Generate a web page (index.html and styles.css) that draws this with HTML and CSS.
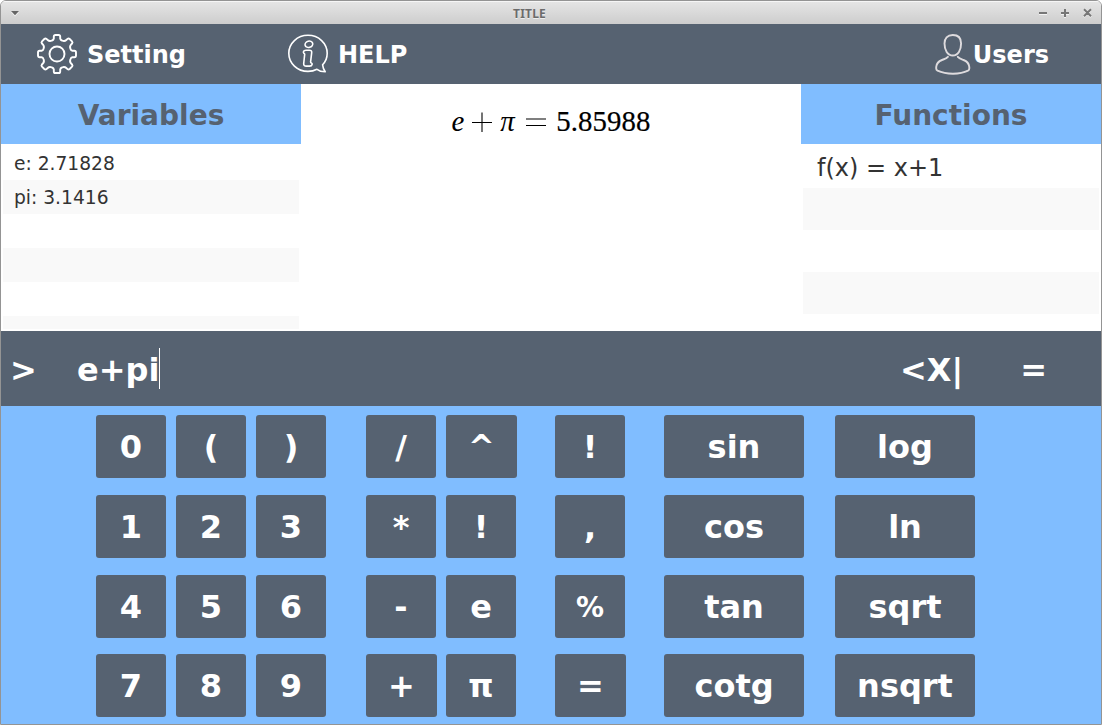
FILE: index.html
```html
<!DOCTYPE html>
<html lang="en">
<head>
<meta charset="utf-8">
<title>TITLE</title>
<link rel="stylesheet" href="styles.css">
</head>
<body>
<div class="window">
  <header class="titlebar">
    <svg class="menu-arrow" width="10" height="7" viewBox="0 0 10 7"><path d="M0.500 1.500h9L5 6.500z" fill="#fff" opacity=".7"/><path d="M1 1h8L5 5.200z" fill="#666"/></svg>
    <span class="title">TITLE</span>
    <svg class="controls" width="56" height="12" viewBox="0 0 56 12">
      <g fill="none" stroke="#fff" stroke-width="2" opacity=".7"><path d="M1 7h8M23 7h8M27 3v8M46 3l7 7M53 3l-7 7"/></g>
      <g fill="none" stroke="#777" stroke-width="2"><path d="M1 6h8M23 6h8M27 2v8M46 2.300l7 7M53 2.300l-7 7"/></g>
    </svg>
  </header>

  <nav class="toolbar">
    <div class="tool setting">
      <svg width="40" height="40" viewBox="0 0 40 40" fill="none" stroke="#fff" stroke-width="1.900" stroke-linejoin="round">
        <path d="M16.800 4.500V2.600Q16.800 1 18.400 1h3.200Q23.200 1 23.200 2.600V4.500Q23.400 6 25 6.500Q27.600 7.600 29.300 6L30.500 4.900Q31.600 4 32.700 5L35 7.300Q36 8.400 35.100 9.500L34 10.700Q32.400 12.400 33.500 15Q34 16.600 35.500 16.800H37.400Q39 16.800 39 18.400V21.600Q39 23.200 37.400 23.200H35.500Q34 23.400 33.500 25Q32.400 27.600 34 29.300L35.100 30.500Q36 31.600 35 32.700L32.700 35Q31.600 36 30.500 35.100L29.300 34Q27.600 32.400 25 33.500Q23.400 34 23.200 35.500V37.400Q23.200 39 21.600 39H18.400Q16.800 39 16.800 37.400V35.500Q16.600 34 15 33.500Q12.400 32.400 10.700 34L9.500 35.100Q8.400 36 7.300 35L5 32.700Q4 31.600 4.900 30.500L6 29.300Q7.600 27.600 6.500 25Q6 23.400 4.500 23.200H2.600Q1 23.200 1 21.600V18.400Q1 16.800 2.600 16.800H4.500Q6 16.600 6.500 15Q7.600 12.400 6 10.700L4.900 9.500Q4 8.400 5 7.300L7.300 5Q8.400 4 9.500 4.900L10.700 6Q12.400 7.600 15 6.500Q16.600 6 16.800 4.500Z"/>
        <circle cx="20" cy="20" r="7.500"/>
      </svg>
      <span>Setting</span>
    </div>
    <div class="tool help">
      <svg width="40" height="40" viewBox="0 0 40 40" fill="none" stroke="#fff" stroke-width="1.600" stroke-linejoin="round">
        <path d="M34.600 30.800Q35 34.500 37.200 37.800Q32 37.600 29 35.300Q25 37.400 20 37.400C9.300 37.400 .8 29.300 .8 19.300S9.300 1.300 20 1.300S39.200 9.300 39.200 19.300Q39.200 26 34.600 30.800Z"/>
        <ellipse cx="20.900" cy="10.300" rx="3.900" ry="3.100" transform="rotate(-15 20.900 10.300)"/>
        <path d="M15.400 18.200Q15.500 16.300 18.200 16.200H21.400Q23.900 16.200 23.700 18.600L22.600 27.800Q22.600 28.900 23.400 28.900Q24.400 29.200 24.100 30.500Q23.700 32.100 21.500 32.100H18.300Q15.500 32.100 15.700 29.500L16.700 20.200Q16.700 19.500 15.800 19.200Z"/>
      </svg>
      <span>HELP</span>
    </div>
    <div class="tool users">
      <svg width="36" height="41" viewBox="0 0 36 41" fill="none" stroke="#dedbde" stroke-width="1.900" stroke-linecap="round" stroke-linejoin="round">
        <path d="M17.800 1C12.300 1 9.500 4.500 9.500 9.500C9.500 16 12.500 21.500 17.800 21.500S26.100 16 26.100 9.500C26.100 4.500 23.300 1 17.800 1Z"/>
        <path d="M12.900 22.800C11.500 24.500 9.500 25 7 26C3 27.500 1.500 29.500 1.200 33V34.500Q1.200 36 2.500 36.700Q9 39.700 18 39.700T33 36.700Q34.300 36 34.300 34.500V33C34 29.500 32.500 27.500 28.500 26C26 25 24.200 24.500 22.800 22.800"/>
      </svg>
      <span>Users</span>
    </div>
  </nav>

  <main class="panels">
    <section class="side variables">
      <h2>Variables</h2>
      <ul><li>e: 2.71828</li><li>pi: 3.1416</li><li></li><li></li><li></li><li></li></ul>
    </section>
    <section class="result">
      <span class="formula"><i class="var">e</i><svg class="op" width="20" height="20" viewBox="0 0 20 20"><path d="M0 10.500h20M10 .5v19.500" stroke="#000" stroke-width="1.100"/></svg><i class="pi">π</i><svg class="eq" width="20" height="20" viewBox="0 0 20 20"><path d="M0 7h20M0 13.500h20" stroke="#000" stroke-width="1.200"/></svg><span class="number">5.85988</span></span>
    </section>
    <section class="side functions">
      <h2>Functions</h2>
      <ul><li>f(x) = x+1</li><li></li><li></li><li></li><li></li></ul>
    </section>
  </main>

  <div class="entry">
    <span class="prompt">&gt;</span>
    <span class="expression">e+pi</span><span class="caret"></span>
    <span class="erase">&lt;X|</span>
    <span class="submit">=</span>
  </div>

  <div class="keypad">
    <button>0</button><button>(</button><button>)</button><button>/</button><button class="plus1">^</button><button>!</button><button class="wide">sin</button><button class="wide">log</button>
    <button>1</button><button>2</button><button>3</button><button>*</button><button>!</button><button>,</button><button class="wide">cos</button><button class="wide">ln</button>
    <button>4</button><button>5</button><button>6</button><button>-</button><button>e</button><button class="percent">%</button><button class="wide">tan</button><button class="wide">sqrt</button>
    <button>7</button><button>8</button><button>9</button><button class="plus1">+</button><button>π</button><button class="plus1">=</button><button class="wide">cotg</button><button class="wide">nsqrt</button>
  </div>
</div>
</body>
</html>
```
FILE: styles.css
```css
* { box-sizing: border-box; }

body {
  margin: 0;
  background: #fff;
  font-family: "DejaVu Sans", sans-serif;
}

.window {
  width: 1102px;
  height: 725px;
  border: 1px solid #949494;
  border-radius: 6px 6px 0 0;
  overflow: hidden;
  display: flex;
  flex-direction: column;
}

.titlebar {
  height: 23px;
  flex: none;
  display: grid;
  grid-template-columns: 56px 1fr 100px;
  align-items: center;
  background: linear-gradient(#e6e6e6, #cdcdcd);
  box-shadow: inset 0 1px #f6f6f6;
}

.menu-arrow { margin: 2px 0 0 9px; }

.title {
  text-align: center;
  padding: 2px 0 0 1px;
  font: bold 12px/16px "Noto Sans", sans-serif;
  letter-spacing: 0.2px;
  color: #6b6b6b;
  text-shadow: 0 1px #eee;
}

.controls { margin: 1px 0 0 37px; }

.toolbar {
  height: 60px;
  flex: none;
  display: flex;
  align-items: center;
  background: #566271;
  color: #fff;
  font-size: 24px;
  font-weight: bold;
}

.tool { display: flex; align-items: center; }
.tool span { line-height: 28px; padding-top: 1px; }
.setting { margin-left: 36px; gap: 10px; }
.help { margin-left: 102px; gap: 10px; }
.users { margin-left: auto; margin-right: 52px; gap: 2px; }

.panels {
  height: 247px;
  flex: none;
  display: grid;
  grid-template-columns: 300px 500px 300px;
  background: #fff;
}

.side { height: 247px; display: flex; flex-direction: column; }

.side h2 {
  margin: 0;
  height: 60px;
  flex: none;
  padding-top: 2px;
  background: #80bdff;
  color: #566271;
  font-size: 28px;
  line-height: 60px;
  text-align: center;
}

.side ul {
  list-style: none;
  margin: 2px;
  padding: 0;
  height: 183px;
  overflow: hidden;
  color: #333;
}

.side li:nth-child(even) { background: #f9f9f9; }

.variables li { height: 34px; line-height: 36px; padding-left: 11px; font-size: 18.670px; }
.functions li { height: 42px; line-height: 44px; padding-left: 14px; font-size: 24px; }

.result { display: flex; justify-content: center; padding-top: 20px; }

.formula {
  display: flex;
  align-items: center;
  height: 34px;
  color: #000;
  font-family: "Liberation Serif", serif;
  font-size: 28.800px;
}

.op { margin: 2px 8px 0 8px; }
.pi { width: 18px; }
.eq { margin: 2px 10px 0 8px; }
.number { letter-spacing: 0.1px; -webkit-text-stroke: 0.200px #000; }

.entry {
  height: 75px;
  flex: none;
  display: flex;
  align-items: center;
  padding-top: 3px;
  background: #566271;
  color: #fff;
  font-size: 32px;
  font-weight: bold;
}

.prompt { width: 76px; padding-left: 9px; }
.caret { width: 1px; height: 41px; margin: -4px 0 0; background: #fff; }
.erase { margin-left: auto; }
.submit { margin: 0 54px 0 57px; }

.keypad {
  flex: 1;
  display: grid;
  grid-template-columns: 80px 80px 110px 80px 109px 109px 171px 140px;
  grid-template-rows: 80px 80px 79px 63px;
  padding: 9px 0 0 95px;
  background: #80bdff;
}

.keypad button {
  width: 70px;
  height: 63px;
  padding: 0;
  border: 0;
  border-radius: 3px;
  background: #566271;
  color: #fff;
  font: bold 32px "DejaVu Sans", sans-serif;
}

.keypad .plus1 { width: 71px; }
.keypad .wide { width: 140px; }
.keypad .percent { padding-top: 2px; font-size: 28px; }
```
